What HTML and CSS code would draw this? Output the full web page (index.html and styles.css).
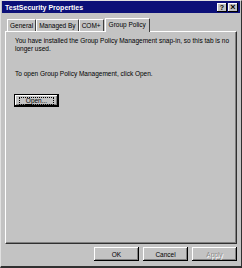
FILE: index.html
```html
<!DOCTYPE html>
<html lang="en">
<head>
  <meta charset="UTF-8" />
  <title>TestSecurity Properties</title>
  <link rel="stylesheet" href="styles.css">
</head>
<body>
  <div class="window">
    <div class="titlebar">
      <span class="title">TestSecurity Properties</span>
      <div class="caption-btns">
        <span class="cap-btn">?</span>
        <span class="cap-btn close">&#215;</span>
      </div>
    </div>

    <div class="tabs">
      <span class="tab">General</span>
      <span class="tab">Managed By</span>
      <span class="tab">COM+</span>
      <span class="tab active">Group Policy</span>
    </div>

    <div class="panel">
      <p>You have installed the Group Policy Management snap-in, so this tab is no longer used.</p>
      <p class="gap">To open Group Policy Management, click Open.</p>
      <button class="btn default"><span class="focus"><u>O</u>pen...</span></button>
    </div>

    <div class="actions">
      <button class="btn">OK</button>
      <button class="btn">Cancel</button>
      <button class="btn" disabled>Apply</button>
    </div>
  </div>
</body>
</html>
```

FILE: styles.css
```css
* { box-sizing: border-box; margin: 0; padding: 0; }
body {
  font-family: 'Liberation Sans', Arial, sans-serif;
  font-size: 6.5px;
  color: #000;
  background: #c3c3c3;
}

.window {
  width: 242px;
  height: 268px;
  background: #c3c3c3;
  border-top: 1px solid #e0e0e0;
  border-left: 1px solid #e0e0e0;
  border-right: 1px solid #303030;
  border-bottom: 2px solid #303030;
  padding: 0 1px;
  display: flex;
  flex-direction: column;
}

.titlebar {
  height: 12px;
  background: #0c1078;
  display: flex;
  align-items: center;
  justify-content: space-between;
  padding: 0 2px 0 3px;
}
.title {
  color: #fff;
  font-weight: bold;
  font-size: 7px;
}
.caption-btns { display: flex; gap: 1px; }
.cap-btn {
  width: 10px;
  height: 9px;
  background: #c3c3c3;
  box-shadow: inset -1px -1px 0 #000, inset 1px 1px 0 #fff;
  font-weight: bold;
  font-size: 7px;
  line-height: 9px;
  text-align: center;
}
.cap-btn.close { font-size: 9px; }

.tabs {
  display: flex;
  align-items: flex-end;
  height: 18px;
  padding-left: 5px;
}
.tab {
  height: 12px;
  padding: 0 2px;
  line-height: 11px;
  border-top: 1px solid #fff;
  border-left: 1px solid #fff;
  border-right: 1px solid #404040;
  border-radius: 1px 1px 0 0;
}
.tab.active {
  height: 14px;
  margin-left: 1px;
  padding: 0 3px;
  line-height: 12px;
  position: relative;
  top: 1px;
  background: #c3c3c3;
  z-index: 1;
}

.panel {
  height: 213px;
  margin: 0 3px 0 3px;
  padding: 5px 3px 5px 9px;
  border-top: 1px solid #fff;
  border-left: 1px solid #fff;
  border-right: 1px solid #303030;
  border-bottom: 1px solid #303030;
  box-shadow: inset -1px -1px 0 #808080;
  line-height: 8px;
}
.panel p.gap { margin-top: 17px; }

.btn {
  font-family: inherit;
  font-size: 6.5px;
  width: 45px;
  height: 14px;
  background: #c3c3c3;
  border: none;
  box-shadow: inset -1px -1px 0 #000, inset 1px 1px 0 #fff, inset -2px -2px 0 #808080;
  color: #000;
}
.btn:disabled { color: #8a8a8a; text-shadow: 1px 1px 0 #fff; }

.panel .btn {
  margin-top: 16px;
  margin-left: -1px;
  height: 13px;
}
.btn.default {
  border: 1px solid #000;
  box-shadow: inset -1px -1px 0 #000, inset 1px 1px 0 #fff, inset -2px -2px 0 #808080;
}
.focus {
  display: inline-block;
  padding: 0 6px;
  outline: 1px dotted #000;
  line-height: 6px;
}

.actions {
  display: flex;
  justify-content: flex-end;
  gap: 4px;
  padding: 3px 3px 0 0;
}
```
